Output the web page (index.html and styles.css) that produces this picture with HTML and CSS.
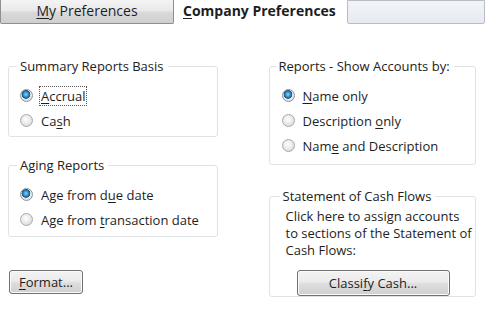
FILE: index.html
```html
<!DOCTYPE html>
<html lang="en">
<head>
  <meta charset="UTF-8">
  <title>Preferences</title>
  <link rel="stylesheet" href="styles.css">
</head>
<body>
  <div class="tabs">
    <div class="tab"><u>M</u>y Preferences</div>
    <div class="tab active"><u>C</u>ompany Preferences</div>
    <div class="tab stub"></div>
  </div>

  <div class="page">
    <div class="column left">
      <fieldset class="group basis">
        <legend>Summary Reports Basis</legend>
        <label class="option"><span class="radio on"></span><span class="focus"><u>A</u>ccrual</span></label>
        <label class="option"><span class="radio"></span><span>Ca<u>s</u>h</span></label>
      </fieldset>

      <fieldset class="group aging">
        <legend>Aging Reports</legend>
        <label class="option"><span class="radio on"></span><span>Age from d<u>u</u>e date</span></label>
        <label class="option"><span class="radio"></span><span>Age from <u>t</u>ransaction date</span></label>
      </fieldset>

      <button class="btn format"><u>F</u>ormat...</button>
    </div>

    <div class="column right">
      <fieldset class="group accounts">
        <legend>Reports - Show Accounts by:</legend>
        <label class="option"><span class="radio on"></span><span><u>N</u>ame only</span></label>
        <label class="option"><span class="radio"></span><span>Description <u>o</u>nly</span></label>
        <label class="option"><span class="radio"></span><span>Nam<u>e</u> and Description</span></label>
      </fieldset>

      <fieldset class="group cashflow">
        <legend>Statement of Cash Flows</legend>
        <p class="note">Click here to assign accounts to sections of the Statement of Cash Flows:</p>
        <button class="btn classify">Classi<u>f</u>y Cash...</button>
      </fieldset>
    </div>
  </div>
</body>
</html>
```

FILE: styles.css
```css
/* Base */
* {
  margin: 0;
  padding: 0;
  box-sizing: border-box;
}

body {
  font-family: 'Open Sans', 'Noto Sans', sans-serif;
  font-size: 13px;
  color: #1e1e1e;
  background: #fff;
  width: 485px;
  height: 312px;
  overflow: hidden;
}

u {
  text-decoration-thickness: 1px;
  text-underline-offset: 2px;
}

/* Tabs */
.tabs {
  display: flex;
  height: 25px;
}

.tab {
  width: 174px;
  height: 24px;
  line-height: 22px;
  text-align: center;
  font-size: 14px;
  border: 1px solid #8e8f8f;
  border-top: none;
  border-radius: 0 0 2px 2px;
  background: linear-gradient(#f4f4f4, #e9e9e9 45%, #d9d9d9 55%, #cfcfcf);
}

.tab.active {
  width: 172px;
  height: 25px;
  font-weight: bold;
  background: #fff;
  border-color: #fff;
  text-align: left;
  padding-left: 8px;
}

.tab.stub {
  flex: 1;
  margin-left: 1px;
  border-color: #b8bcc4;
  border-top: 1px solid #b8bcc4;
  height: 24px;
  background: linear-gradient(#f2f4f8, #e6e9ef);
}

/* Layout */
.page {
  display: flex;
  gap: 51px;
  padding: 33px 9px 0 8px;
}

.column {
  display: flex;
  flex-direction: column;
}

.left {
  width: 210px;
}

.right {
  width: 208px;
}

/* Group boxes */
.group {
  border: 1px solid #dfe3e6;
  border-radius: 3px;
  padding: 6px 0 0 11px;
}

.group legend {
  margin-left: -3px;
  padding: 0 4px 0 3px;
  line-height: 16px;
  color: #222;
}

.basis {
  height: 79px;
}

.aging {
  height: 80px;
  margin-top: 20px;
}

.accounts {
  height: 107px;
  padding-left: 12px;
}

.accounts legend {
  margin-left: -6px;
}

.cashflow {
  height: 109px;
  margin-top: 23px;
  padding: 4px 0 0 12px;
}

.cashflow legend {
  margin-left: -2px;
}

.option {
  display: flex;
  align-items: center;
  height: 25px;
}

.option:first-of-type {
  margin-top: 3px;
}

/* Radio buttons */
.radio {
  width: 13px;
  height: 13px;
  border-radius: 50%;
  margin-right: 8px;
  border: 1px solid #a7a9ab;
  background: radial-gradient(circle at 45% 40%, #ffffff, #e4e4e4 60%, #c9c9c9);
  flex: none;
}

.radio.on {
  border-color: #8e9396;
  background: radial-gradient(circle at 45% 40%, #8fd3f5 0, #2a8ac6 30%, #1a4f7c 45%, #e7ebee 52%, #cfd3d6 100%);
}

.focus {
  outline: 1px dotted #555;
  outline-offset: 0;
  padding: 0 1px;
  margin-left: -1px;
}

/* Statement of cash flows */
.note {
  width: 192px;
  line-height: 17px;
  padding-left: 4px;
}

/* Buttons */
.btn {
  font-family: inherit;
  font-size: 13px;
  color: #1e1e1e;
  border: 1px solid #707070;
  border-radius: 3px;
  background: linear-gradient(#f3f3f3, #ebebeb 45%, #dddddd 55%, #cfcfcf);
  box-shadow: inset 0 0 0 1px #fbfbfb;
  height: 24px;
}

.format {
  width: 74px;
  margin-top: 33px;
  margin-left: 1px;
}

.classify {
  width: 153px;
  height: 26px;
  margin: 11px 0 0 15px;
}
```
